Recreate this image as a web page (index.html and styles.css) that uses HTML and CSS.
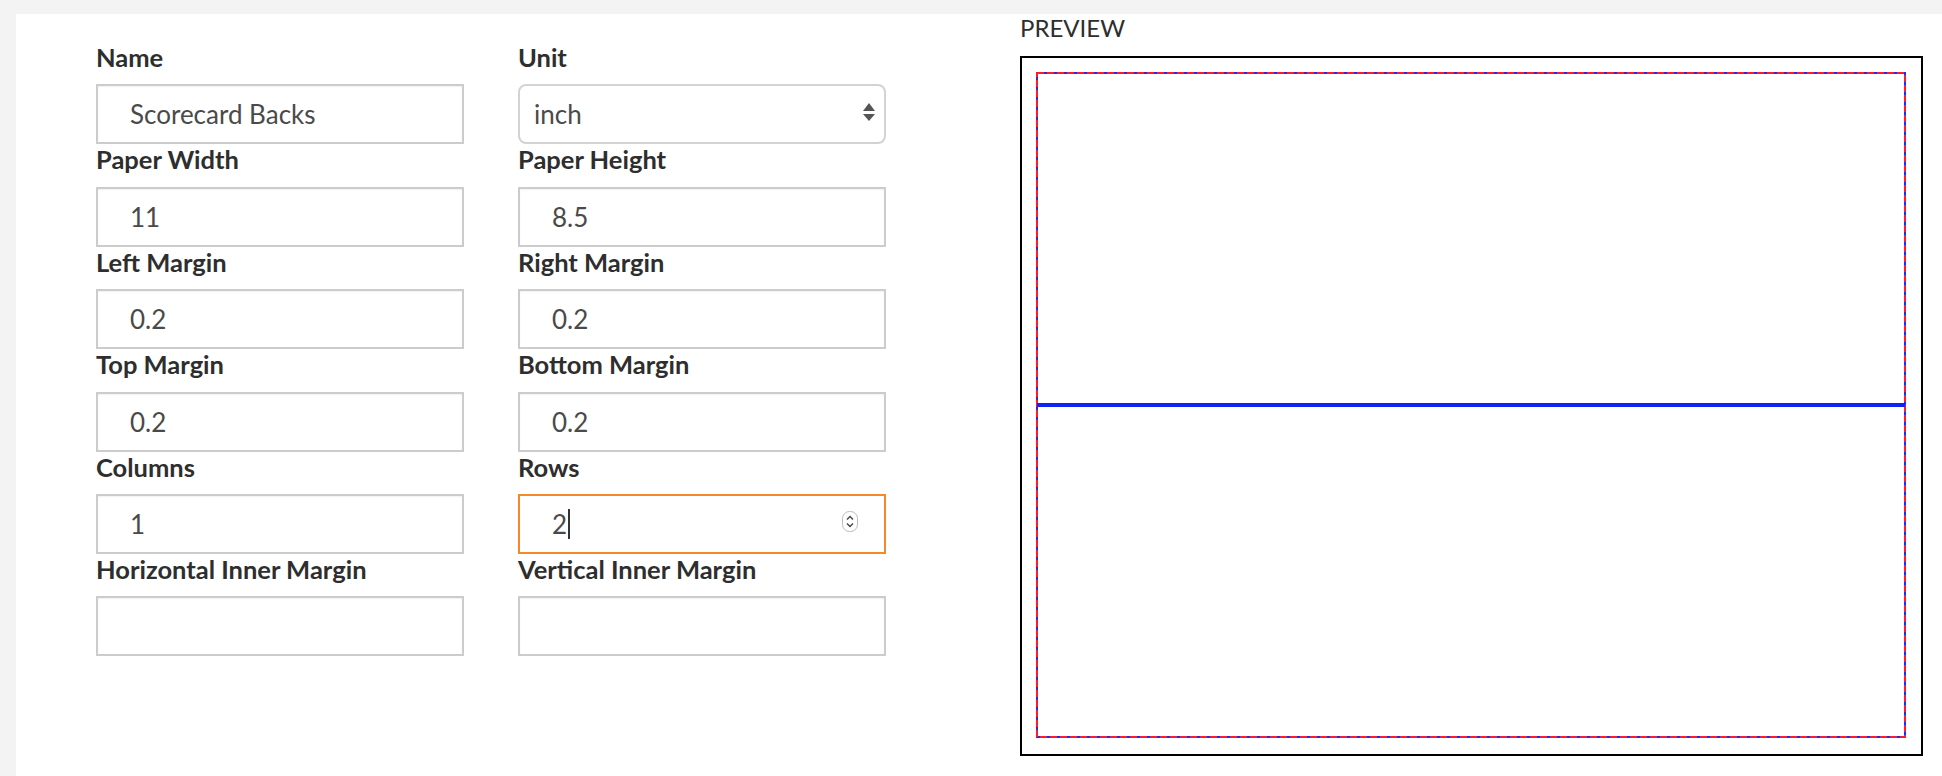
FILE: index.html
```html
<html lang="en">

<head>
    <meta charset="UTF-8">
    <meta name="viewport" content="width=device-width, initial-scale=1.0">
    <title>Label Template</title>
    <link rel="stylesheet" href="styles.css">
</head>

<body>
    <div class="panel">
        <div class="template-form">
            <div class="field">
                <label class="field-label">Name</label>
                <input class="field-input" type="text" value="Scorecard Backs">
            </div>
            <div class="field">
                <label class="field-label">Unit</label>
                <div class="select-wrap">
                    <select class="field-select">
                        <option>inch</option>
                        <option>mm</option>
                    </select>
                    <svg class="select-arrow" width="12" height="18" viewBox="0 0 12 18">
                        <path d="M6 0 L12 8 L0 8 Z" fill="#555"/>
                        <path d="M0 11 L12 11 L6 18 Z" fill="#555"/>
                    </svg>
                </div>
            </div>

            <div class="field">
                <label class="field-label">Paper Width</label>
                <input class="field-input" type="text" value="11">
            </div>
            <div class="field">
                <label class="field-label">Paper Height</label>
                <input class="field-input" type="text" value="8.5">
            </div>

            <div class="field">
                <label class="field-label">Left Margin</label>
                <input class="field-input" type="text" value="0.2">
            </div>
            <div class="field">
                <label class="field-label">Right Margin</label>
                <input class="field-input" type="text" value="0.2">
            </div>

            <div class="field">
                <label class="field-label">Top Margin</label>
                <input class="field-input" type="text" value="0.2">
            </div>
            <div class="field">
                <label class="field-label">Bottom Margin</label>
                <input class="field-input" type="text" value="0.2">
            </div>

            <div class="field">
                <label class="field-label">Columns</label>
                <input class="field-input" type="text" value="1">
            </div>
            <div class="field">
                <label class="field-label">Rows</label>
                <div class="field-input focused">2<span class="caret"></span>
                    <svg class="spinner" width="16" height="21" viewBox="0 0 16 21">
                        <rect x="0.5" y="0.5" width="15" height="20" rx="7" fill="#fff" stroke="#bbb"/>
                        <path d="M5 8.5 L8 5.5 L11 8.5" fill="none" stroke="#444" stroke-width="1.4"/>
                        <path d="M5 12.5 L8 15.5 L11 12.5" fill="none" stroke="#444" stroke-width="1.4"/>
                    </svg>
                </div>
            </div>

            <div class="field">
                <label class="field-label">Horizontal Inner Margin</label>
                <input class="field-input" type="text" value="">
            </div>
            <div class="field">
                <label class="field-label">Vertical Inner Margin</label>
                <input class="field-input" type="text" value="">
            </div>
        </div>

        <div class="preview">
            <div class="preview-title">PREVIEW</div>
            <div class="preview-paper">
                <svg width="899" height="696" viewBox="0 0 899 696">
                    <rect x="15" y="15" width="868" height="664" fill="none" stroke="#1a2cf5" stroke-width="2"/>
                    <rect x="15" y="15" width="868" height="664" fill="none" stroke="#ff1a2e" stroke-width="2" stroke-dasharray="7 3"/>
                    <line x1="15" y1="347" x2="883" y2="347" stroke="#0f24f2" stroke-width="4"/>
                </svg>
            </div>
        </div>
    </div>
</body>

</html>
```

FILE: styles.css
```css
body {
    margin: 0;
    background-color: #f3f3f3;
    font-family: Lato, "Liberation Sans", sans-serif;
    color: #2e2e2e;
}

.panel {
    display: flex;
    align-items: flex-start;
    margin: 14px 0 0 16px;
    min-height: 762px;
    background-color: #fff;
}

.template-form {
    display: grid;
    grid-template-columns: 368px 368px;
    column-gap: 54px;
    padding: 28px 0 0 80px;
}

.field-label {
    display: block;
    margin: 1px 0 13.4px;
    font-size: 25.5px;
    font-weight: bold;
    line-height: 28px;
    color: #2e2e2e;
}

.field-input {
    display: block;
    box-sizing: border-box;
    width: 368px;
    height: 60px;
    margin: 0;
    padding: 0 0 0 32px;
    border: 2px solid #cccccc;
    border-radius: 0;
    box-shadow: inset 0 1px 2px rgba(0, 0, 0, 0.06);
    font-family: Lato, "Liberation Sans", sans-serif;
    font-size: 26px;
    color: #4a4a4a;
    background-color: #fff;
    outline: none;
}

.focused {
    position: relative;
    display: flex;
    align-items: center;
    border-color: #f5892a;
    box-shadow: none;
}

.caret {
    display: inline-block;
    width: 2px;
    height: 30px;
    margin-left: 1px;
    background-color: #333;
}

.spinner {
    position: absolute;
    top: 15px;
    right: 26px;
}

.select-wrap {
    position: relative;
    width: 368px;
}

.field-select {
    display: block;
    box-sizing: border-box;
    width: 368px;
    height: 60px;
    padding: 0 0 0 14px;
    border: 2px solid #d3d3d3;
    border-radius: 8px;
    background-color: #fff;
    font-family: Lato, "Liberation Sans", sans-serif;
    font-size: 26px;
    color: #4a4a4a;
    -webkit-appearance: none;
    appearance: none;
    outline: none;
}

.select-arrow {
    position: absolute;
    top: 19px;
    right: 11px;
}

.preview {
    margin-left: 134px;
}

.preview-title {
    font-size: 24px;
    line-height: 28px;
    color: #2e2e2e;
}

.preview-paper {
    box-sizing: border-box;
    width: 903px;
    height: 700px;
    margin-top: 14px;
    border: 2px solid #000;
}

.preview-paper svg {
    display: block;
}
```
